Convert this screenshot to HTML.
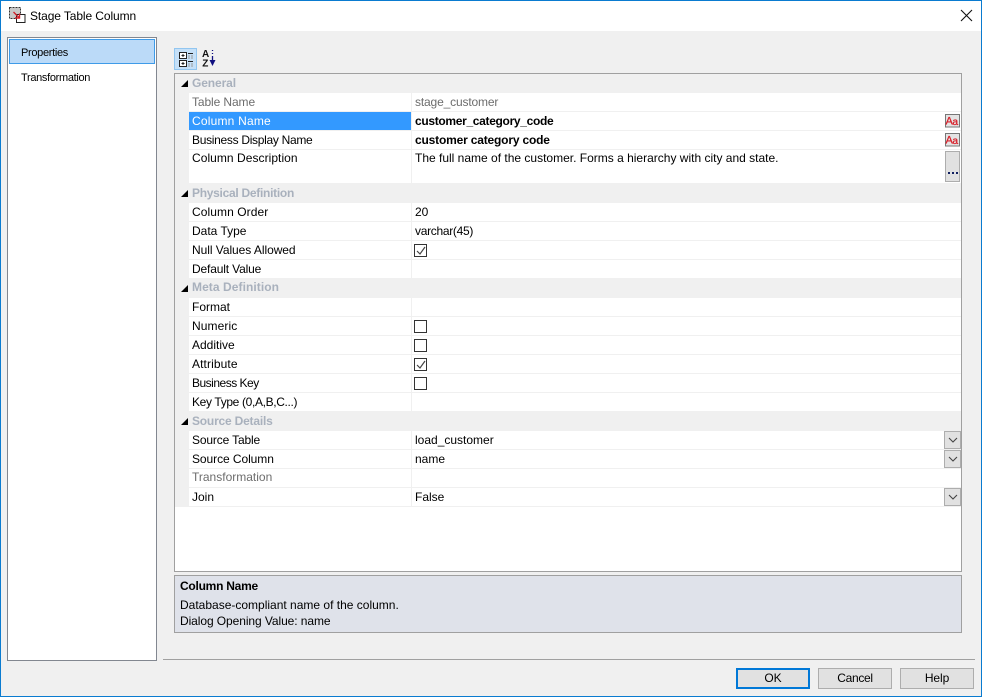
<!DOCTYPE html>
<html><head><meta charset="utf-8"><style>
html,body{margin:0;padding:0}
body{width:982px;height:697px;overflow:hidden;position:relative;background:#f0f0f0;font:12px/16px "Liberation Sans",sans-serif;color:#000}
div,svg{position:absolute;box-sizing:border-box}
.t{white-space:nowrap}
.h{left:175px;width:786px;height:19px;background:#f0f0f0}
.h .t{left:17px;top:1px;font-weight:bold;color:#a9b1bd}
.h i{position:absolute;left:6px;top:6px;width:0;height:0;border-style:solid;border-width:0 0 7px 7px;border-color:transparent transparent #000 transparent}
.r{left:189px;width:772px;height:19px;background:#fff;border-bottom:1px solid #f0f0f0}
.r .l{left:3px;top:1px}
.r .v{left:226px;top:1px}
.r .s{left:222px;top:0;width:1px;height:100%;background:#f0f0f0}
.g{color:#6d6d6d}
.b{font-weight:bold}
.cb{left:225px;top:3px;width:13px;height:13px;background:#fff;border:1px solid #333}
.dd{left:755px;top:0;width:17px;height:18px;background:#e1e1e1;border:1px solid #adadad}
.btn{top:668px;width:74px;height:21px;background:#e1e1e1;border:1px solid #adadad;text-align:center;line-height:19px}
.side{font-size:11px;letter-spacing:-.32px}
</style></head><body>
<div style="left:0;top:0;width:982px;height:697px;border:1px solid #0a7bd0;z-index:9;pointer-events:none"></div>
<div style="left:1px;top:1px;width:980px;height:30px;background:#fff"></div>
<svg style="left:8px;top:6px" width="20" height="20" viewBox="0 0 20 20"><rect x="1.500" y="1.500" width="11" height="11" fill="#c8c8c8" stroke="#333" stroke-dasharray="2 1"/><rect x="8.500" y="8.500" width="8.500" height="8" fill="#fff" stroke="#222"/><path d="M5.500 6l5.500 5.500M11.500 7.500v4.500h-4.500" fill="none" stroke="#d0202a" stroke-width="1.400"/></svg>
<div class="t" style="left:30px;top:8px;letter-spacing:-.1px">Stage Table Column</div>
<svg style="left:960px;top:9px" width="13" height="13" viewBox="0 0 13 13"><path d="M1 1l11 11M12 1L1 12" stroke="#111" stroke-width="1.100" fill="none"/></svg>

<div style="left:7px;top:37px;width:150px;height:624px;background:#fff;border:1px solid #828790"></div>
<div style="left:9px;top:39px;width:146px;height:25px;background:#bbdaf8;border:1px solid #3f9be8"></div>
<div class="t side" style="left:21px;top:45px">Properties</div>
<div class="t side" style="left:21px;top:70px">Transformation</div>

<div style="left:174px;top:48px;width:23px;height:22px;background:#c5e0f8;border:1px solid #92c6f0"></div>
<svg style="left:178px;top:51px" width="16" height="17" viewBox="0 0 16 17"><g fill="none" stroke="#222"><rect x="1.500" y="1.500" width="7" height="6" fill="#fff"/><rect x="1.500" y="9.500" width="7" height="6" fill="#fff"/><path d="M3.500 4.500h3M5 3v3M3.500 12.500h3M5 11v3M10 2.500h5M10 10.500h5"/></g><path d="M10 5h5M10 7h5M10 13h5M10 15h5" stroke="#9a9a9a" stroke-dasharray="2 1"/></svg>
<svg style="left:201px;top:49px" width="16" height="20" viewBox="0 0 16 20"><text x="1" y="8" font-family="Liberation Sans" font-size="10" font-weight="bold" fill="#111">A</text><text x="1.200" y="17.500" font-family="Liberation Sans" font-size="10" font-weight="bold" fill="#111">Z</text><path d="M11.500 1v1M11.500 4v1M11.500 7v5" stroke="#101080" stroke-width="1.300"/><path d="M8.500 11h6l-3 6z" fill="#101080"/></svg>

<div style="left:174px;top:73px;width:788px;height:499px;background:#fff;border:1px solid #a0a0a0"></div>
<div style="left:175px;top:74px;width:14px;height:433px;background:#f0f0f0"></div>

<div class="h" style="top:74px"><i></i><div class="t" style="letter-spacing:-.1px">General</div></div>
<div class="r" style="top:93px"><div class="s"></div><div class="t l g" style="letter-spacing:-.1px">Table Name</div><div class="t v g" style="letter-spacing:-.15px">stage_customer</div></div>
<div class="r" style="top:112px"><div class="s"></div><div style="left:0;top:0;width:222px;height:18px;background:#3399ff"></div><div class="t l" style="color:#fff;letter-spacing:.2px">Column Name</div><div class="t v b" style="letter-spacing:-.32px">customer_category_code</div></div>
<div class="r" style="top:131px"><div class="s"></div><div class="t l" style="letter-spacing:-.3px">Business Display Name</div><div class="t v b" style="letter-spacing:-.18px">customer category code</div></div>
<div class="r" style="top:150px;height:34px"><div class="s"></div><div class="t l" style="top:0;letter-spacing:.05px">Column Description</div><div class="t v" style="top:0">The full name of the customer. Forms a hierarchy with city and state.</div></div>
<div class="h" style="top:184px"><i></i><div class="t" style="letter-spacing:-.28px">Physical Definition</div></div>
<div class="r" style="top:203px"><div class="s"></div><div class="t l" style="letter-spacing:.08px">Column Order</div><div class="t v">20</div></div>
<div class="r" style="top:222px"><div class="s"></div><div class="t l">Data Type</div><div class="t v" style="letter-spacing:-.3px">varchar(45)</div></div>
<div class="r" style="top:241px"><div class="s"></div><div class="t l" style="letter-spacing:-.05px">Null Values Allowed</div><div class="cb"><svg style="left:1px;top:1px" width="10" height="10" viewBox="0 0 10 10"><path d="M1 5l3 3 5-7" fill="none" stroke="#444" stroke-width="1.200"/></svg></div></div>
<div class="r" style="top:260px"><div class="s"></div><div class="t l" style="letter-spacing:-.15px">Default Value</div></div>
<div class="h" style="top:279px;height:19px"><i></i><div class="t" style="top:0;letter-spacing:.07px">Meta Definition</div></div>
<div class="r" style="top:298px"><div class="s"></div><div class="t l">Format</div></div>
<div class="r" style="top:317px"><div class="s"></div><div class="t l" style="letter-spacing:.1px">Numeric</div><div class="cb"></div></div>
<div class="r" style="top:336px"><div class="s"></div><div class="t l">Additive</div><div class="cb"></div></div>
<div class="r" style="top:355px"><div class="s"></div><div class="t l" style="letter-spacing:.1px">Attribute</div><div class="cb"><svg style="left:1px;top:1px" width="10" height="10" viewBox="0 0 10 10"><path d="M1 5l3 3 5-7" fill="none" stroke="#444" stroke-width="1.200"/></svg></div></div>
<div class="r" style="top:374px"><div class="s"></div><div class="t l" style="letter-spacing:-.5px">Business Key</div><div class="cb"></div></div>
<div class="r" style="top:393px"><div class="s"></div><div class="t l" style="letter-spacing:-.35px">Key Type (0,A,B,C...)</div></div>
<div class="h" style="top:412px"><i></i><div class="t" style="letter-spacing:-.2px">Source Details</div></div>
<div class="r" style="top:431px"><div class="s"></div><div class="t l" style="letter-spacing:-.15px">Source Table</div><div class="t v">load_customer</div><div class="dd"><svg style="left:3px;top:5px" width="10" height="7" viewBox="0 0 10 7"><path d="M1 1l4 4 4-4" fill="none" stroke="#444" stroke-width="1.100"/></svg></div></div>
<div class="r" style="top:450px"><div class="s"></div><div class="t l" style="letter-spacing:-.07px">Source Column</div><div class="t v">name</div><div class="dd"><svg style="left:3px;top:5px" width="10" height="7" viewBox="0 0 10 7"><path d="M1 1l4 4 4-4" fill="none" stroke="#444" stroke-width="1.100"/></svg></div></div>
<div class="r" style="top:469px"><div class="s"></div><div class="t l g" style="top:0">Transformation</div></div>
<div class="r" style="top:488px"><div class="s"></div><div class="t l">Join</div><div class="t v">False</div><div class="dd"><svg style="left:3px;top:5px" width="10" height="7" viewBox="0 0 10 7"><path d="M1 1l4 4 4-4" fill="none" stroke="#444" stroke-width="1.100"/></svg></div></div>

<svg style="left:945px;top:113px" width="15" height="15" viewBox="0 0 15 15"><rect x="0.500" y="1.500" width="14" height="12.500" fill="#e4e4e4" stroke="#777"/><text x="0.500" y="11.500" font-family="Liberation Sans" font-size="11" fill="#d8202a" stroke="#d8202a" stroke-width=".3">A</text><text x="7.500" y="12" font-family="Liberation Sans" font-size="10" fill="#d8202a" stroke="#d8202a" stroke-width=".3">a</text></svg>
<svg style="left:945px;top:132px" width="15" height="15" viewBox="0 0 15 15"><rect x="0.500" y="1.500" width="14" height="12.500" fill="#e4e4e4" stroke="#777"/><text x="0.500" y="11.500" font-family="Liberation Sans" font-size="11" fill="#d8202a" stroke="#d8202a" stroke-width=".3">A</text><text x="7.500" y="12" font-family="Liberation Sans" font-size="10" fill="#d8202a" stroke="#d8202a" stroke-width=".3">a</text></svg>
<div style="left:945px;top:151px;width:15px;height:31px;background:#e1e1e1;border:1px solid #adadad"><svg style="left:1px;top:19px" width="12" height="4" viewBox="0 0 12 4"><path d="M1 1h2v2H1zM5 1h2v2H5zM9 1h2v2H9z" fill="#102060"/></svg></div>

<div style="left:174px;top:575px;width:788px;height:58px;background:#dfe2ea;border:1px solid #a0a0a0"></div>
<div class="t b" style="left:180px;top:578px;letter-spacing:-.25px">Column Name</div>
<div class="t" style="left:180px;top:597px">Database-compliant name of the column.</div>
<div class="t" style="left:180px;top:613px;letter-spacing:-.08px">Dialog Opening Value: name</div>

<div style="left:163px;top:659px;width:812px;height:1px;background:#a0a0a0"></div>
<div class="btn" style="left:736px;border:2px solid #0078d7;line-height:17px">OK</div>
<div class="btn" style="left:818px;letter-spacing:-.3px">Cancel</div>
<div class="btn" style="left:900px;letter-spacing:-.1px">Help</div>
</body></html>
